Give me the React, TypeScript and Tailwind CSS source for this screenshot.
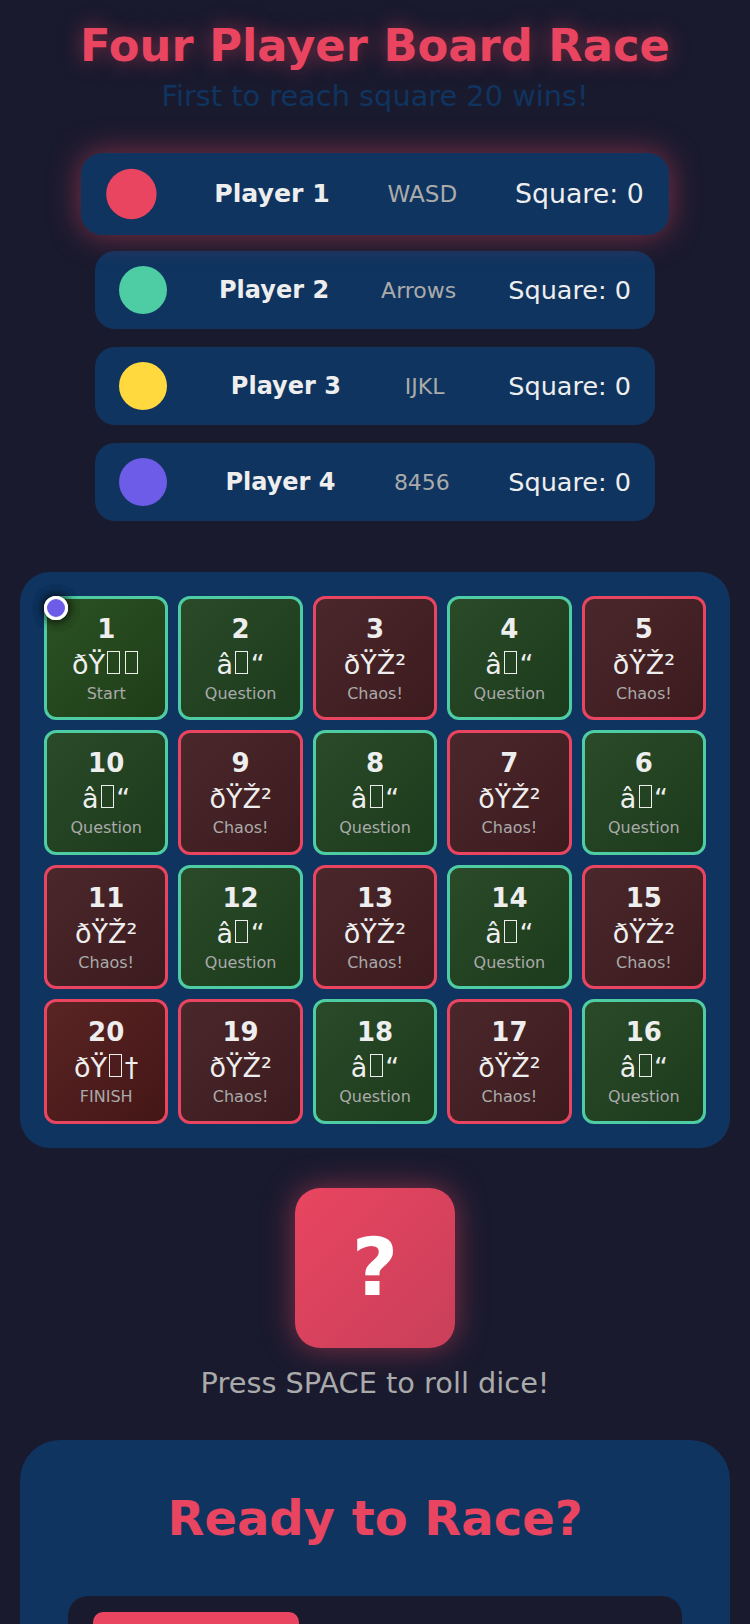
import React from 'react';

const players = [
  { name: 'Player 1', keys: 'WASD', color: 'bg-[#e94560]', active: true },
  { name: 'Player 2', keys: 'Arrows', color: 'bg-[#4ecca3]', active: false },
  { name: 'Player 3', keys: 'IJKL', color: 'bg-[#ffd93d]', active: false },
  { name: 'Player 4', keys: '8456', color: 'bg-[#6c5ce7]', active: false },
];

const tokenColors = ['bg-[#e94560]', 'bg-[#4ecca3]', 'bg-[#ffd93d]', 'bg-[#6c5ce7]'];

type Kind = 'start' | 'question' | 'chaos' | 'finish';

// missing-glyph box, as the broken emoji bytes show up
function Box() {
  return <span className="mx-[0.09em] inline-block h-[0.84em] w-[0.48em] border-[1.5px] border-current align-baseline" />;
}

// mojibake as it shows in the page (utf-8 emoji read as cp1252)
const icons: Record<Kind, React.ReactNode> = {
  start: (
    <>
      {'\u00f0\u0178'}
      <Box />
      <Box />
    </>
  ),
  question: (
    <>
      {'\u00e2'}
      <Box />
      {'\u201c'}
    </>
  ),
  chaos: '\u00f0\u0178\u017d\u00b2',
  finish: (
    <>
      {'\u00f0\u0178'}
      <Box />
      {'\u2020'}
    </>
  ),
};

const labels: Record<Kind, string> = {
  start: 'Start',
  question: 'Question',
  chaos: 'Chaos!',
  finish: 'FINISH',
};

const kindOf = (n: number): Kind => {
  if (n === 1) return 'start';
  if (n === 20) return 'finish';
  return n % 2 === 0 ? 'question' : 'chaos';
};

const rows = [
  [1, 2, 3, 4, 5],
  [10, 9, 8, 7, 6],
  [11, 12, 13, 14, 15],
  [20, 19, 18, 17, 16],
];

function Tile({ n }: { n: number }) {
  const kind = kindOf(n);
  const styles: Record<Kind, string> = {
    start: 'border-[#4ecca3] from-[#2c5224] to-[#1e3d18]',
    question: 'border-[#4ecca3] from-[#2a4a28] to-[#1c3b1c]',
    chaos: 'border-[#e94560] from-[#4a272a] to-[#3c1b1e]',
    finish: 'border-[#e94560] from-[#5a2424] to-[#441616]',
  };
  return (
    <div
      className={`relative flex aspect-square flex-col items-center justify-center rounded-xl border-[3px] bg-linear-to-br ${styles[kind]}`}
    >
      <div className="text-[26px] font-bold leading-[36px] text-[#eeeeee]">{n}</div>
      <div className="whitespace-nowrap text-[27px] leading-[35px] text-[#eeeeee]">{icons[kind]}</div>
      <div className="text-[16px] leading-[24px] text-[#aaaaaa]">{labels[kind]}</div>
      {n === 1 &&
        tokenColors.map((c) => (
          <div
            key={c}
            className={`absolute -left-[3px] -top-[3px] h-6 w-6 rounded-full border-[3px] border-white ${c} shadow-[0_0_12px_rgba(0,0,0,0.35)]`}
          />
        ))}
    </div>
  );
}

export default function App() {
  return (
    <div className="min-h-screen bg-[#1a1a2e] pb-10 pt-5 font-['DejaVu_Sans',sans-serif] text-[#eeeeee]">
      <h1 className="text-center text-[44.8px] font-bold leading-[52px] text-[#e94560] [text-shadow:0_0_20px_rgba(233,69,96,0.5)]">
        Four Player Board Race
      </h1>
      <p className="mt-[5px] text-center text-[28.8px] leading-[38px] text-[#0f3460]">
        First to reach square 20 wins!
      </p>

      {/* players */}
      <div className="mx-auto mt-[40px] flex w-[560px] flex-col gap-[18px]">
        {players.map((p) => (
          <div
            key={p.name}
            className={`flex items-center justify-between rounded-[20px] bg-[#0f3460] px-6 py-[15px] ${
              p.active ? 'scale-105 shadow-[0_0_28px_rgba(233,69,96,0.5)]' : ''
            }`}
          >
            <div className={`h-12 w-12 rounded-full ${p.color}`} />
            <div className="text-[24px] font-bold">{p.name}</div>
            <div className="text-[22px] text-[#aaaaaa]">{p.keys}</div>
            <div className="text-[25.5px]">Square: 0</div>
          </div>
        ))}
      </div>

      {/* board */}
      <div className="mx-5 mt-[51px] rounded-[30px] bg-[#0f3460] p-6">
        <div className="grid grid-cols-5 gap-[10px]">
          {rows.flat().map((n) => (
            <Tile key={n} n={n} />
          ))}
        </div>
      </div>

      {/* dice */}
      <div className="mx-auto mt-10 flex h-40 w-40 items-center justify-center rounded-[25px] bg-linear-to-br from-[#e94560] to-[#c93f59] text-[80px] font-bold leading-none text-white shadow-[0_0_30px_rgba(233,69,96,0.5)]">
        ?
      </div>
      <p className="mt-[14px] text-center text-[28.8px] leading-[42px] text-[#aaaaaa]">
        Press SPACE to roll dice!
      </p>

      {/* start panel */}
      <div className="mx-5 mt-9 rounded-[40px] bg-[#0f3460] px-12 pb-12 pt-[42px]">
        <h2 className="mb-[42px] text-center text-[48px] font-bold leading-[72px] text-[#e94560]">
          Ready to Race?
        </h2>
        <div className="rounded-[20px] bg-[#1a1a2e] px-[25px] pb-6 pt-4">
          <div className="h-14 w-[206px] rounded-[10px] bg-[#e94560]" />
        </div>
      </div>
    </div>
  );
}
